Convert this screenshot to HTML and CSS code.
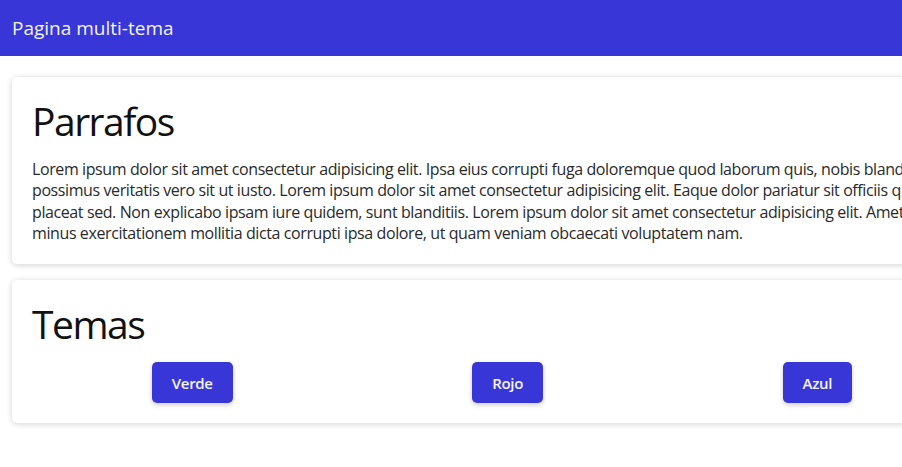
FILE: index.html
```html
<!DOCTYPE html>
<html lang="es">
<head>
<meta charset="utf-8">
<title>Pagina multi-tema</title>
<link rel="stylesheet" href="styles.css">
</head>
<body>
<header class="topbar">
  <span class="brand">Pagina multi-tema</span>
</header>
<main class="content">
  <section class="card">
    <h1 class="card-title">Parrafos</h1>
    <p class="card-text">Lorem ipsum dolor sit amet consectetur adipisicing elit. Ipsa eius corrupti fuga doloremque quod laborum quis, nobis blanditiis possimus veritatis vero sit ut iusto. Lorem ipsum dolor sit amet consectetur adipisicing elit. Eaque dolor pariatur sit officiis quaerat placeat sed. Non explicabo ipsam iure quidem, sunt blanditiis. Lorem ipsum dolor sit amet consectetur adipisicing elit. Amet nemo minus exercitationem mollitia dicta corrupti ipsa dolore, ut quam veniam obcaecati voluptatem nam.</p>
  </section>
  <section class="card">
    <h1 class="card-title">Temas</h1>
    <div class="theme-row">
      <button class="btn" type="button">Verde</button>
      <button class="btn" type="button">Rojo</button>
      <button class="btn" type="button">Azul</button>
    </div>
  </section>
</main>
</body>
</html>
```
FILE: styles.css
```css
html, body {
  margin: 0;
  overflow: hidden;
}

body {
  font-family: "Open Sans", "Noto Sans", sans-serif;
  color: #262626;
  background: #ffffff;
}

.topbar {
  height: 56px;
  background: #3836d6;
  display: flex;
  align-items: center;
  padding: 0 12px;
}

.brand {
  color: #f4f4ff;
  font-size: 19px;
  letter-spacing: 0;
}

.content {
  display: flex;
  flex-direction: column;
  gap: 16px;
  padding: 21px 12px;
}

.card {
  width: 940px;
  flex: none;
  padding: 20px;
  background: #fff;
  border-radius: 5px;
  box-shadow: 0 1px 6px rgba(0, 0, 0, 0.18);
}

.card-title {
  margin: 0 0 14px;
  font-size: 39px;
  line-height: 48px;
  font-weight: 400;
  color: #111;
  letter-spacing: -1.5px;
}

.card-text {
  margin: 0;
  font-size: 16px;
  line-height: 21.3px;
  letter-spacing: -0.4px;
  color: #2a2a2a;
}

.theme-row {
  display: flex;
  justify-content: space-around;
}

.btn {
  height: 41px;
  padding: 0 20px;
  border: none;
  border-radius: 5px;
  background: #3836d6;
  color: #f4f4ff;
  font-family: "Open Sans", "Noto Sans", sans-serif;
  font-size: 15px;
  font-weight: 600;
  letter-spacing: -0.3px;
  box-shadow: 0 2px 5px rgba(0, 0, 0, 0.2);
}
```
